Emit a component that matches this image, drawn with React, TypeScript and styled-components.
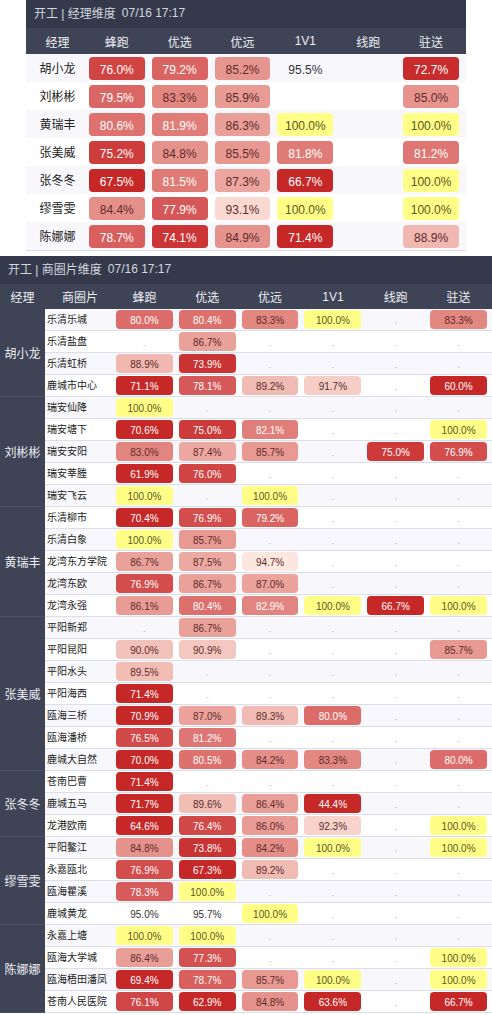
import styled, { createGlobalStyle } from "styled-components";

const GlobalStyle = createGlobalStyle`
  body {
    margin: 0;
    background: #fff;
    font-family: "Liberation Sans", "Noto Sans CJK SC", sans-serif;
  }
`;

type Cell = number | null;

const METRICS = ["蜂跑", "优选", "优远", "1V1", "线跑", "驻送"];

const managerRows: { name: string; values: Cell[] }[] = [
  { name: "胡小龙", values: [76.0, 79.2, 85.2, 95.5, null, 72.7] },
  { name: "刘彬彬", values: [79.5, 83.3, 85.9, null, null, 85.0] },
  { name: "黄瑞丰", values: [80.6, 81.9, 86.3, 100, null, 100] },
  { name: "张美威", values: [75.2, 84.8, 85.5, 81.8, null, 81.2] },
  { name: "张冬冬", values: [67.5, 81.5, 87.3, 66.7, null, 100] },
  { name: "缪雪雯", values: [84.4, 77.9, 93.1, 100, null, 100] },
  { name: "陈娜娜", values: [78.7, 74.1, 84.9, 71.4, null, 88.9] },
];

const _ = null;
const areaGroups: { manager: string; rows: [string, Cell[]][] }[] = [
  {
    manager: "胡小龙",
    rows: [
      ["乐清乐城", [80.0, 80.4, 83.3, 100, _, 83.3]],
      ["乐清盐盘", [_, 86.7, _, _, _, _]],
      ["乐清虹桥", [88.9, 73.9, _, _, _, _]],
      ["鹿城市中心", [71.1, 78.1, 89.2, 91.7, _, 60.0]],
    ],
  },
  {
    manager: "刘彬彬",
    rows: [
      ["瑞安仙降", [100, _, _, _, _, _]],
      ["瑞安塘下", [70.6, 75.0, 82.1, _, _, 100]],
      ["瑞安安阳", [83.0, 87.4, 85.7, _, 75.0, 76.9]],
      ["瑞安莘塍", [61.9, 76.0, _, _, _, _]],
      ["瑞安飞云", [100, _, 100, _, _, _]],
    ],
  },
  {
    manager: "黄瑞丰",
    rows: [
      ["乐清柳市", [70.4, 76.9, 79.2, _, _, _]],
      ["乐清白象", [100, 85.7, _, _, _, _]],
      ["龙湾东方学院", [86.7, 87.5, 94.7, _, _, _]],
      ["龙湾东欧", [76.9, 86.7, 87.0, _, _, _]],
      ["龙湾永强", [86.1, 80.4, 82.9, 100, 66.7, 100]],
    ],
  },
  {
    manager: "张美威",
    rows: [
      ["平阳新郑", [_, 86.7, _, _, _, _]],
      ["平阳昆阳", [90.0, 90.9, _, _, _, 85.7]],
      ["平阳水头", [89.5, _, _, _, _, _]],
      ["平阳海西", [71.4, _, _, _, _, _]],
      ["瓯海三桥", [70.9, 87.0, 89.3, 80.0, _, _]],
      ["瓯海潘桥", [76.5, 81.2, _, _, _, _]],
      ["鹿城大自然", [70.0, 80.5, 84.2, 83.3, _, 80.0]],
    ],
  },
  {
    manager: "张冬冬",
    rows: [
      ["苍南巴曹", [71.4, _, _, _, _, _]],
      ["鹿城五马", [71.7, 89.6, 86.4, 44.4, _, _]],
      ["龙港欧南", [64.6, 76.4, 86.0, 92.3, _, 100]],
    ],
  },
  {
    manager: "缪雪雯",
    rows: [
      ["平阳鳌江", [84.8, 73.8, 84.2, 100, _, 100]],
      ["永嘉瓯北", [76.9, 67.3, 89.2, _, _, _]],
      ["瓯海瞿溪", [78.3, 100, _, _, _, _]],
      ["鹿城黄龙", [95.0, 95.7, 100, _, _, _]],
    ],
  },
  {
    manager: "陈娜娜",
    rows: [
      ["永嘉上塘", [100, 100, _, _, _, _]],
      ["瓯海大学城", [86.4, 77.3, _, _, _, 100]],
      ["瓯海梧田潘凤", [69.4, 78.7, 85.7, 100, _, 100]],
      ["苍南人民医院", [76.1, 62.9, 84.8, 63.6, _, 66.7]],
    ],
  },
];

// colour scale: deep red for low, pale for high, yellow for 100
const STOPS: [number, [number, number, number]][] = [
  [72, [198, 40, 40]],
  [75, [205, 58, 58]],
  [78, [214, 88, 88]],
  [81, [222, 118, 114]],
  [84, [228, 140, 134]],
  [87, [235, 163, 156]],
  [89, [240, 185, 177]],
  [92, [247, 208, 200]],
  [95, [253, 232, 227]],
];

function badgeColor(v: number): string {
  if (v <= STOPS[0][0]) return "rgb(198,40,40)";
  for (let i = 1; i < STOPS.length; i++) {
    const [x1, c1] = STOPS[i];
    const [x0, c0] = STOPS[i - 1];
    if (v <= x1) {
      const t = (v - x0) / (x1 - x0);
      const c = c0.map((a, k) => Math.round(a + (c1[k] - a) * t));
      return `rgb(${c.join(",")})`;
    }
  }
  return "rgb(253,232,227)";
}

type Tone = "badge" | "yellow" | "plain";

function toneOf(v: number): Tone {
  if (v >= 100) return "yellow";
  if (v >= 95) return "plain";
  return "badge";
}

const Page = styled.div`
  width: 492px;
`;

const ManagerPanel = styled.section`
  width: 440px;
  margin: 0 auto;
  border-bottom: 1px solid #dcdce6;
`;

const AreaPanel = styled.section`
  width: 492px;
  margin-top: 5px;
`;

const TitleBar = styled.div<{ $pad: number }>`
  height: 28px;
  background: #343a4b;
  color: #d3d6de;
  font-size: 12px;
  display: flex;
  align-items: center;
  padding: 0 0 3px ${(p) => p.$pad}px;
  box-sizing: border-box;
  white-space: pre;
`;

const TitleTime = styled.span`
  margin-left: 6px;
`;

const ManagerHeader = styled.div`
  display: grid;
  grid-template-columns: repeat(7, 1fr);
  height: 26px;
  background: #3e4356;
`;

const AreaHeader = styled.div`
  display: grid;
  grid-template-columns: 45px 70px repeat(6, 1fr);
  height: 25px;
  background: #3e4356;
`;

const HeadCell = styled.div<{ $padRight?: number }>`
  display: flex;
  align-items: center;
  justify-content: center;
  color: #eceef3;
  font-size: 12px;
  padding-right: ${(p) => p.$padRight ?? 0}px;
`;

const ManagerRow = styled.div<{ $alt: boolean }>`
  display: grid;
  grid-template-columns: repeat(7, 1fr);
  height: 28px;
  background: ${(p) => (p.$alt ? "#fff" : "#f7f7fc")};
`;

const NameCell = styled.div`
  display: flex;
  align-items: center;
  justify-content: center;
  font-size: 12px;
  color: #222;
  padding-bottom: 1px;
`;

const MetricCell = styled.div<{ $big: boolean }>`
  padding: ${(p) => (p.$big ? "3px 7px 2px 0" : "1px 5px 1px 1px")};
`;

const Badge = styled.div<{ $bg: string; $fg: string; $big: boolean }>`
  height: 100%;
  border-radius: 4px;
  background: ${(p) => p.$bg};
  color: ${(p) => p.$fg};
  font-size: ${(p) => (p.$big ? 12 : 10)}px;
  display: flex;
  align-items: center;
  justify-content: center;
  padding-top: 2px;
  box-sizing: border-box;
`;

const Dash = styled.div`
  height: 100%;
  display: flex;
  align-items: center;
  justify-content: center;
  padding-top: 5px;
  box-sizing: border-box;
  font-size: 8px;
  color: #b8b8c4;
`;

const Group = styled.div`
  display: flex;
`;

const GroupName = styled.div`
  width: 45px;
  flex: none;
  background: #3e4356;
  border-bottom: 1px solid #4b5165;
  color: #eceef3;
  font-size: 12px;
  display: flex;
  align-items: center;
  justify-content: center;
  box-sizing: border-box;
`;

const GroupRows = styled.div`
  flex: 1;
`;

const AreaRow = styled.div<{ $alt: boolean }>`
  display: grid;
  grid-template-columns: 70px repeat(6, 1fr);
  height: 22px;
  box-sizing: border-box;
  border-bottom: 1px solid #dedee8;
  background: ${(p) => (p.$alt ? "#fff" : "#f8f8fc")};
`;

const AreaName = styled.div`
  display: flex;
  align-items: center;
  padding: 0 0 2px 2px;
  font-size: 10px;
  color: #222;
  white-space: nowrap;
`;

function Value({ v, big, dash }: { v: Cell; big: boolean; dash: boolean }) {
  if (v === null) return dash ? <Dash>-</Dash> : null;
  const tone = toneOf(v);
  const text = `${v.toFixed(1)}%`;
  if (tone === "plain") return <Badge $bg="transparent" $fg="#333" $big={big}>{text}</Badge>;
  if (tone === "yellow") return <Badge $bg="#ffff88" $fg="#5b5620" $big={big}>{text}</Badge>;
  const fg = v < 83 ? "#fff" : "#5e2c2c";
  return <Badge $bg={badgeColor(v)} $fg={fg} $big={big}>{text}</Badge>;
}

export default function App() {
  let rowIndex = 0;
  return (
    <Page>
      <GlobalStyle />
      <ManagerPanel>
        <TitleBar $pad={8}>
          开工 | 经理维度<TitleTime>07/16 17:17</TitleTime>
        </TitleBar>
        <ManagerHeader>
          <HeadCell>经理</HeadCell>
          {METRICS.map((m) => (
            <HeadCell key={m} $padRight={7}>{m}</HeadCell>
          ))}
        </ManagerHeader>
        {managerRows.map((r, i) => (
          <ManagerRow key={r.name} $alt={i % 2 === 1}>
            <NameCell>{r.name}</NameCell>
            {r.values.map((v, j) => (
              <MetricCell key={j} $big>
                <Value v={v} big dash={false} />
              </MetricCell>
            ))}
          </ManagerRow>
        ))}
      </ManagerPanel>

      <AreaPanel>
        <TitleBar $pad={8}>
          开工 | 商圈片维度<TitleTime>07/16 17:17</TitleTime>
        </TitleBar>
        <AreaHeader>
          <HeadCell>经理</HeadCell>
          <HeadCell>商圈片</HeadCell>
          {METRICS.map((m) => (
            <HeadCell key={m} $padRight={4}>{m}</HeadCell>
          ))}
        </AreaHeader>
        {areaGroups.map((g) => (
          <Group key={g.manager}>
            <GroupName>{g.manager}</GroupName>
            <GroupRows>
              {g.rows.map(([area, values]) => {
                const alt = rowIndex++ % 2 === 1;
                return (
                  <AreaRow key={area} $alt={alt}>
                    <AreaName>{area}</AreaName>
                    {values.map((v, j) => (
                      <MetricCell key={j} $big={false}>
                        <Value v={v} big={false} dash />
                      </MetricCell>
                    ))}
                  </AreaRow>
                );
              })}
            </GroupRows>
          </Group>
        ))}
      </AreaPanel>
    </Page>
  );
}
